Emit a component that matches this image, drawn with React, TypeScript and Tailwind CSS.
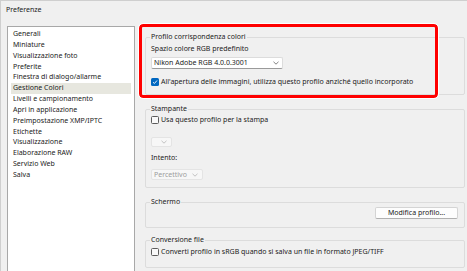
import React from 'react';

const items = [
  'Generali',
  'Miniature',
  'Visualizzazione foto',
  'Preferite',
  'Finestra di dialogo/allarme',
  'Gestione Colori',
  'Livelli e campionamento',
  'Apri in applicazione',
  'Preimpostazione XMP/IPTC',
  'Etichette',
  'Visualizzazione',
  'Elaborazione RAW',
  'Servizio Web',
  'Salva',
];

const Chevron: React.FC<{ muted?: boolean }> = ({ muted }) => (
  <svg width="6" height="4" viewBox="0 0 6 4" className="shrink-0">
    <path d="M0.5 0.8 L3 3.2 L5.5 0.8" fill="none" stroke={muted ? '#b4b4b4' : '#606060'} strokeWidth="0.8" />
  </svg>
);

const Check: React.FC<{ checked?: boolean }> = ({ checked }) =>
  checked ? (
    <span className="w-[8px] h-[8px] rounded-[1.5px] bg-[#0067c0] flex items-center justify-center shrink-0">
      <svg width="6" height="6" viewBox="0 0 6 6">
        <path d="M1 3.2 L2.4 4.5 L5 1.5" fill="none" stroke="#fff" strokeWidth="0.9" />
      </svg>
    </span>
  ) : (
    <span className="w-[8px] h-[8px] rounded-[1.5px] border border-[#5c5c5c] bg-[#f9f9f9] shrink-0" />
  );

const Group: React.FC<{ title: string; className?: string; children?: React.ReactNode }> = ({ title, className, children }) => (
  <fieldset className={`border border-[#dcdcdc] rounded-[2px] px-[5px] ${className ?? ''}`}>
    <legend className="h-[10px] leading-[10px] px-[1px] -ml-[1px]">{title}</legend>
    {children}
  </fieldset>
);

export default function App() {
  return (
    <div
      className="w-[467px] h-[271px] overflow-hidden relative bg-[#f0f0f0] border-l border-t border-[#cfcfcf] text-[7px] text-[#1b1b1b]"
      style={{ fontFamily: '"Noto Sans", "Open Sans", sans-serif' }}
    >
      <div className="h-[25px] pl-[5px] pt-[4px] leading-[10px]">Preferenze</div>

      <div className="flex pl-[6px] gap-[10px]">
        {/* categories */}
        <div className="w-[128px] h-[270px] bg-white border border-[#a8a8a8] pt-[2px] px-[3px] shrink-0">
          {items.map((it) => (
            <div
              key={it}
              className={`h-[10.85px] leading-[10.85px] pl-[2px] ${it === 'Gestione Colori' ? 'bg-[#e7e7df]' : ''}`}
            >
              {it}
            </div>
          ))}
        </div>

        {/* settings */}
        <div className="w-[320px] flex flex-col pt-[6px]">
          <Group title="Profilo corrispondenza colori" className="pb-[7px]">
            <div className="mt-[2px] h-[10px] leading-[10px]">Spazio colore RGB predefinito</div>
            <div className="mt-[3px] w-[132px] h-[12px] bg-white border border-[#dcdcdc] border-b-[#9a9a9a] rounded-[2px] flex items-center justify-between pl-[2px] pr-[3px]">
              <span className="leading-[10px]">Nikon Adobe RGB 4.0.0.3001</span>
              <Chevron />
            </div>
            <div className="mt-[8px] h-[10px] flex items-center gap-[2px]">
              <Check checked />
              <span className="leading-[10px]">All'apertura delle immagini, utilizza questo profilo anziché quello incorporato</span>
            </div>
          </Group>

          <Group title="Stampante" className="mt-[9px] pb-[7px]">
            <div className="mt-[1px] h-[10px] flex items-center gap-[2px]">
              <Check />
              <span className="leading-[10px]">Usa questo profilo per la stampa</span>
            </div>
            <div className="mt-[12px] w-[21px] h-[10px] bg-[#f7f7f7] border border-[#e4e4e4] rounded-[2px] flex items-center justify-end pr-[4px]">
              <Chevron muted />
            </div>
            <div className="mt-[6px] h-[10px] leading-[10px]">Intento:</div>
            <div className="mt-[6px] w-[52px] h-[11px] bg-[#f7f7f7] border border-[#e4e4e4] rounded-[2px] flex items-center justify-between pl-[2px] pr-[4px] text-[#9c9c9c]">
              <span className="leading-[10px]">Percettivo</span>
              <Chevron muted />
            </div>
          </Group>

          <Group title="Schermo" className="mt-[9px] pb-[8px]">
            <div className="flex justify-end pr-[1px]">
              <div className="w-[83px] h-[12px] bg-[#fdfdfd] border border-[#d4d4d4] border-b-[#b0b0b0] rounded-[2px] flex items-center justify-center leading-[10px]">
                Modifica profilo...
              </div>
            </div>
          </Group>

          <Group title="Conversione file" className="mt-[7px] pb-[10px]">
            <div className="mt-[2px] h-[10px] flex items-center gap-[2px]">
              <Check />
              <span className="leading-[10px]">Converti profilo in sRGB quando si salva un file in formato JPEG/TIFF</span>
            </div>
          </Group>
        </div>
      </div>

      {/* annotation */}
      <div className="absolute left-[138px] top-[23px] w-[299px] h-[74px] rounded-[4px] border-[3px] border-[#ff0000] outline outline-1 outline-white pointer-events-none" />
    </div>
  );
}
